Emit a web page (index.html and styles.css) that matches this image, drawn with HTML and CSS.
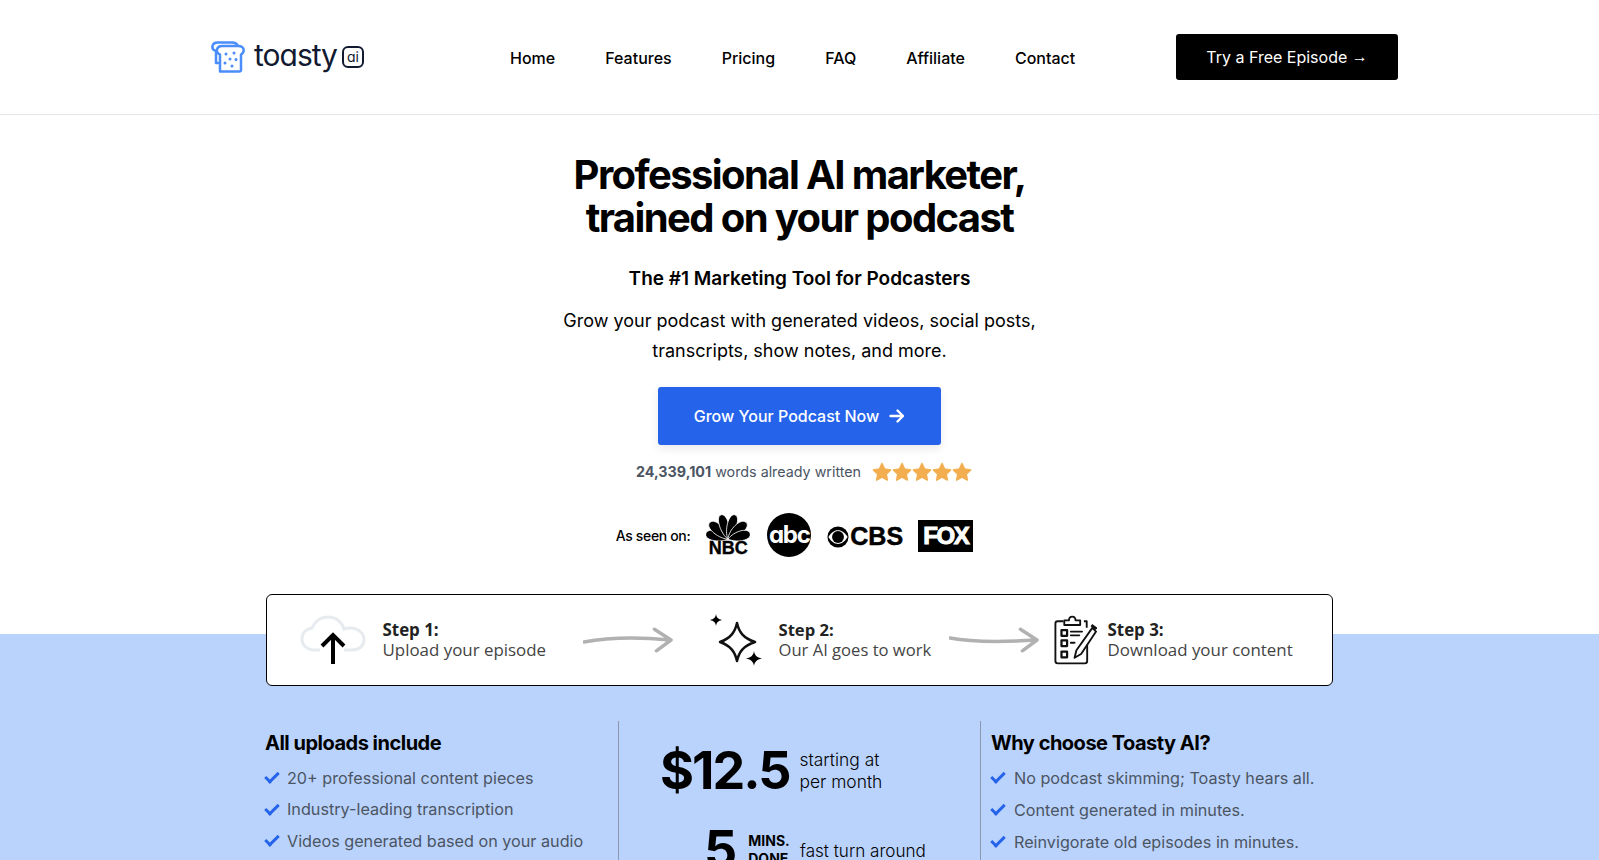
FILE: index.html
```html
<!DOCTYPE html>
<html lang="en">
<head>
  <meta charset="UTF-8">
  <meta name="viewport" content="width=device-width, initial-scale=1.0">
  <title>Toasty AI</title>
  <link rel="stylesheet" href="styles.css">
</head>
<body>
  <header class="site-header">
    <a class="logo" href="#">
      <svg class="logo-toast" viewBox="0 0 34 32" fill="none" stroke="#4a8dfb" stroke-width="2.500" stroke-linejoin="round" stroke-linecap="round">
        <path d="M7 22H5V10C2 9 1 7 1.500 5C2 3 4 1.500 6.500 1.500H21C24 1.500 26 2.500 27 5"/>
        <path d="M9 30.500V13.500C6.500 12.500 5.500 10.500 6 8.500C6.500 6.500 8.500 5 11 5H27.500C30.500 5 32.700 6.800 32.700 9.300C32.700 11.300 31.500 12.700 30 13.500V29C30 30 29 30.500 28 30.500Z" fill="#fff"/>
        <g fill="#4a8dfb" stroke="none">
          <circle cx="15" cy="13" r="1.500"/><circle cx="23" cy="12" r="1.500"/>
          <circle cx="19" cy="18" r="1.500"/><circle cx="25" cy="18.500" r="1.500"/>
          <circle cx="14" cy="22" r="1.500"/><circle cx="21" cy="25" r="1.500"/>
        </g>
      </svg>
      <span class="logo-word">toasty</span>
      <span class="logo-ai">ai</span>
    </a>
    <nav class="main-nav">
      <a href="#">Home</a>
      <a href="#">Features</a>
      <a href="#">Pricing</a>
      <a href="#">FAQ</a>
      <a href="#">Affiliate</a>
      <a href="#">Contact</a>
    </nav>
    <a class="try-btn" href="#">Try a Free Episode <span class="try-arrow">→</span></a>
  </header>

  <section class="hero">
    <h1>Professional AI marketer,<br>trained on your podcast</h1>
    <p class="hero-sub">The #1 Marketing Tool for Podcasters</p>
    <p class="hero-text">Grow your podcast with generated videos, social posts,<br>transcripts, show notes, and more.</p>
    <a class="grow-btn" href="#">
      Grow Your Podcast Now
      <svg viewBox="0 0 16 16" fill="none" stroke="#fff" stroke-width="2.400" stroke-linecap="round" stroke-linejoin="round"><path d="M1.500 8H14M8.500 2.500L14 8L8.500 13.500"/></svg>
    </a>
    <div class="words-row">
      <span><b>24,339,101</b> words already written</span>
      <span class="stars">
        <svg viewBox="0 0 20 20"><path d="M10 1.500l2.600 5.600 6 .8-4.400 4.200 1.200 6L10 15.200l-5.400 2.900 1.200-6-4.400-4.200 6-.8z"/></svg>
        <svg viewBox="0 0 20 20"><path d="M10 1.500l2.600 5.600 6 .8-4.400 4.200 1.200 6L10 15.200l-5.400 2.900 1.200-6-4.400-4.200 6-.8z"/></svg>
        <svg viewBox="0 0 20 20"><path d="M10 1.500l2.600 5.600 6 .8-4.400 4.200 1.200 6L10 15.200l-5.400 2.900 1.200-6-4.400-4.200 6-.8z"/></svg>
        <svg viewBox="0 0 20 20"><path d="M10 1.500l2.600 5.600 6 .8-4.400 4.200 1.200 6L10 15.200l-5.400 2.900 1.200-6-4.400-4.200 6-.8z"/></svg>
        <svg viewBox="0 0 20 20"><path d="M10 1.500l2.600 5.600 6 .8-4.400 4.200 1.200 6L10 15.200l-5.400 2.900 1.200-6-4.400-4.200 6-.8z"/></svg>
      </span>
    </div>
    <div class="seen-row">
      <span class="seen-label">As seen on:</span>
      <span class="nbc">
        <svg viewBox="0 0 44 30" preserveAspectRatio="none" fill="#000" stroke="#fff" stroke-width=".8">
          <path transform="translate(22 28) rotate(-74)" d="M0 0C-7 -8 -7.500 -23 0 -23C7.500 -23 7 -8 0 0Z"/>
          <path transform="translate(22 28) rotate(-44)" d="M0 0C-7 -8 -7.500 -26 0 -26C7.500 -26 7 -8 0 0Z"/>
          <path transform="translate(22 28) rotate(-14)" d="M0 0C-6 -8 -6.500 -28 0 -28C6.500 -28 6 -8 0 0Z"/>
          <path transform="translate(22 28) rotate(14)" d="M0 0C-6 -8 -6.500 -28 0 -28C6.500 -28 6 -8 0 0Z"/>
          <path transform="translate(22 28) rotate(44)" d="M0 0C-7 -8 -7.500 -26 0 -26C7.500 -26 7 -8 0 0Z"/>
          <path transform="translate(22 28) rotate(74)" d="M0 0C-7 -8 -7.500 -23 0 -23C7.500 -23 7 -8 0 0Z"/>
        </svg>
        <span class="nbc-word">NBC</span>
      </span>
      <span class="abc">abc</span>
      <span class="cbs">
        <svg viewBox="0 0 24 24"><circle cx="12" cy="12" r="11.500"/><path d="M1.500 12C5 6 9 4.500 12 4.500S19 6 22.500 12C19 18 15 19.500 12 19.500S5 18 1.500 12Z" fill="#fff"/><circle cx="12" cy="12" r="6.500"/></svg>
        <span>CBS</span>
      </span>
      <span class="fox">FOX</span>
    </div>
  </section>

  <div class="steps-wrap">
    <div class="steps">
      <svg class="cloud" viewBox="0 0 66 50" fill="none">
        <path d="M20 35H14C7 35 2 30 2 24C2 18 6 14 12 13C15 6 21 2 28 2C36 2 42 7 44 14C46 13 48 13 50 13C58 13 64 18 64 25C64 31 59 35 52 35H44" stroke="#e7ebef" stroke-width="3"/>
        <path d="M33 49V21M22 31L33 20L44 31" stroke="#000" stroke-width="4"/>
      </svg>
      <div class="step-text step-one"><b>Step 1:</b><span>Upload your episode</span></div>
      <svg class="arrow arrow-one" viewBox="0 0 92 26" fill="none" stroke="#b1b1b1" stroke-width="3.500" stroke-linecap="round" stroke-linejoin="round"><path d="M1 15C28 10 58 10 89 13M73 2L90 13L75 24"/></svg>
      <svg class="sparkle" viewBox="0 0 52 52">
        <path d="M27 9C29 18 33 24 45 28C33 32 29 38 27 47C25 38 21 32 10 28C21 24 25 18 27 9Z" fill="none" stroke="#111" stroke-width="2.500" stroke-linejoin="round"/>
        <path d="M6 0C6.500 3.500 8 5 12 6C8 7 6.500 8.500 6 12C5.500 8.500 4 7 0 6C4 5 5.500 3.500 6 0Z"/>
        <path d="M44 37C44.600 41 46.500 43.500 52 44.500C46.500 45.500 44.600 48 44 52C43.400 48 41.500 45.500 36 44.500C41.500 43.500 43.400 41 44 37Z"/>
      </svg>
      <div class="step-text step-two"><b>Step 2:</b><span>Our AI goes to work</span></div>
      <svg class="arrow arrow-two" viewBox="0 0 92 26" fill="none" stroke="#b1b1b1" stroke-width="3.500" stroke-linecap="round" stroke-linejoin="round"><path d="M1 11C28 16 58 15 89 13M73 2L90 13L75 24"/></svg>
      <svg class="clipboard" viewBox="0 0 46 52" fill="none" stroke="#111" stroke-width="2" stroke-linejoin="round">
        <path d="M10 6H4C2.500 6 1.500 7 1.500 8.500V48.500C1.500 50 2.500 51 4 51H33C34.500 51 35.500 50 35.500 48.500V31"/>
        <path d="M32 6H35V13"/>
        <path d="M11 10V5H16C16 2.500 17.500 1 19.500 1S23 2.500 23 5H28V10Z"/>
        <path d="M8 15.500H14V21.500H8ZM8 26.500H14V32.500H8ZM8 38.500H14V44.500H8Z" stroke-width="2.400"/>
        <path d="M18 17H30M18 21H27M18 29H22" stroke-linecap="round"/>
        <path d="M41 13L45 17L29 41L22 45L24 37Z"/>
        <path d="M40 10L45.500 14" stroke-width="3"/>
      </svg>
      <div class="step-text step-three"><b>Step 3:</b><span>Download your content</span></div>
    </div>
  </div>

  <section class="details">
    <div class="details-grid">
      <div class="detail-col col-left">
        <h3>All uploads include</h3>
        <ul class="checks">
          <li>20+ professional content pieces</li>
          <li>Industry-leading transcription</li>
          <li>Videos generated based on your audio</li>
        </ul>
      </div>
      <div class="detail-col col-mid">
        <div class="price-row">
          <span class="price">$12.5</span>
          <span class="price-note">starting at<br>per month</span>
        </div>
        <div class="speed-row">
          <span class="speed-num">5</span>
          <span class="speed-unit">MINS.<br>DONE.</span>
          <span class="speed-note">fast turn around</span>
        </div>
      </div>
      <div class="detail-col col-right">
        <h3>Why choose Toasty AI?</h3>
        <ul class="checks checks-wide">
          <li>No podcast skimming; Toasty hears all.</li>
          <li>Content generated in minutes.</li>
          <li>Reinvigorate old episodes in minutes.</li>
        </ul>
      </div>
    </div>
  </section>
</body>
</html>
```

FILE: styles.css
```css
html, body {
  margin: 0;
  height: 100%;
  overflow: hidden;
}
body {
  font-family: Inter, "Liberation Sans", sans-serif;
  color: #000;
  background: #fff;
}
a {
  color: inherit;
  text-decoration: none;
}

/* header */
.site-header {
  height: 114px;
  border-bottom: 1px solid #e5e7eb;
  padding: 0 201px 0 211px;
  display: flex;
  align-items: center;
}
.logo {
  display: flex;
  align-items: center;
  width: 299px;
}
.logo-toast {
  width: 34px;
  height: 32px;
  margin-right: 9px;
}
.logo-word {
  font-size: 30px;
  letter-spacing: -1px;
  color: #111a30;
  line-height: 32px;
  font-feature-settings: "cv11";
  margin-top: -4px;
}
.logo-ai {
  width: 22px;
  height: 22px;
  margin-left: 5px;
  border: 2px solid #111a30;
  border-radius: 6px;
  font-size: 14px;
  line-height: 17px;
  text-align: center;
  color: #111a30;
  box-sizing: border-box;
  font-feature-settings: "cv11";
  margin-top: -1px;
}
.main-nav {
  display: flex;
  gap: 50px;
  font-size: 16px;
  font-weight: 450;
  flex: 1;
  padding-top: 2px;
}
.try-btn {
  width: 222px;
  height: 46px;
  background: #000;
  color: #fff;
  border-radius: 3px;
  font-size: 16px;
  font-weight: 400;
  display: flex;
  align-items: center;
  justify-content: center;
  white-space: pre;
}
.try-arrow {
  font-family: "Liberation Sans", sans-serif;
  font-weight: 400;
}

/* hero */
.hero {
  display: flex;
  flex-direction: column;
  align-items: center;
  padding-top: 38px;
}
h1 {
  margin: 0;
  font-size: 40px;
  line-height: 43px;
  font-weight: 700;
  letter-spacing: -1.600px;
  text-align: center;
}
.hero-sub {
  margin: 26px 0 0;
  font-size: 19px;
  line-height: 28px;
  font-weight: 600;
}
.hero-text {
  margin: 13px 0 0;
  font-size: 18px;
  line-height: 29.600px;
  text-align: center;
}
.grow-btn {
  margin-top: 22px;
  width: 283px;
  height: 58px;
  background: #2563eb;
  color: #fff;
  border-radius: 3px;
  font-size: 16px;
  font-weight: 450;
  display: flex;
  align-items: center;
  justify-content: center;
  gap: 10px;
  box-shadow: 0 4px 10px rgba(0, 0, 0, .08);
}
.grow-btn svg {
  width: 16px;
  height: 16px;
}
.words-row {
  margin-top: 14px;
  margin-left: 9px;
  height: 24px;
  display: flex;
  align-items: center;
  gap: 11px;
  font-size: 14.300px;
  color: #4b5563;
}
.words-row b {
  font-weight: 700;
}
.stars {
  display: flex;
  margin-top: 1px;
}
.stars svg {
  width: 20px;
  height: 20px;
  fill: #f2ae4f;
  stroke: #f2ae4f;
  stroke-width: 1.500;
  stroke-linejoin: round;
}
.seen-row {
  margin-top: 28px;
  margin-left: -10px;
  height: 48px;
  display: flex;
  align-items: center;
}
.seen-label {
  font-size: 14px;
  font-weight: 500;
  letter-spacing: -.35px;
  margin-right: 16px;
}
.nbc {
  width: 44px;
  display: flex;
  flex-direction: column;
  align-items: center;
}
.nbc svg {
  width: 44px;
  height: 27px;
}
.nbc-word {
  font-family: "Liberation Sans Narrow", "Liberation Sans", sans-serif;
  font-size: 18px;
  line-height: 15px;
  font-weight: 700;
  -webkit-text-stroke: .4px #000;
}
.abc {
  width: 44px;
  height: 44px;
  margin-left: 17px;
  border-radius: 50%;
  background: #000;
  color: #fff;
  font-size: 24px;
  font-weight: 700;
  line-height: 44px;
  letter-spacing: -1.200px;
  text-align: center;
  font-feature-settings: "cv11";
}
.cbs {
  margin-left: 16px;
  margin-top: 3px;
  width: 76px;
  display: flex;
  align-items: center;
  gap: 1px;
  font-family: "Liberation Sans", sans-serif;
  font-size: 25px;
  font-weight: 700;
  -webkit-text-stroke: .5px #000;
}
.cbs svg {
  width: 22px;
  height: 22px;
  flex: none;
}
.fox {
  margin-left: 15px;
  margin-top: 2px;
  width: 55px;
  height: 32px;
  background: #000;
  color: #fff;
  font-family: "Liberation Sans", sans-serif;
  font-size: 24px;
  font-weight: 700;
  line-height: 32px;
  text-align: center;
  letter-spacing: -1.500px;
  -webkit-text-stroke: 1px #fff;
}

/* steps box */
.steps-wrap {
  position: relative;
  margin-top: 35px;
  margin-bottom: -52px;
  display: flex;
  justify-content: center;
}
.steps {
  width: 1067px;
  height: 92px;
  margin-left: -1px;
  box-sizing: border-box;
  background: #fff;
  border: 1px solid #000;
  border-radius: 6px;
  display: flex;
  align-items: center;
  font-family: "Open Sans", sans-serif;
  color: #444;
  padding-left: 33px;
}
.cloud {
  width: 66px;
  height: 50px;
  flex: none;
}
.step-text {
  display: flex;
  flex-direction: column;
  font-size: 16.900px;
  line-height: 20px;
  white-space: nowrap;
}
.step-text b {
  font-weight: 700;
  color: #222;
}
.step-one {
  margin-left: 17px;
  width: 183px;
}
.arrow {
  width: 90px;
  height: 26px;
  flex: none;
}
.arrow-one {
  margin-left: 17px;
}
.sparkle {
  width: 52px;
  height: 52px;
  flex: none;
  margin-left: 37px;
}
.step-two {
  margin-left: 17px;
  width: 170px;
  font-size: 16.600px;
}
.clipboard {
  width: 43px;
  height: 52px;
  flex: none;
  margin-left: 15px;
}
.step-three {
  margin-left: 11px;
}

/* details */
.details {
  background: #bad3fd;
  padding-top: 87px;
  height: 300px;
}
.details-grid {
  width: 1067px;
  margin: 0 auto;
  transform: translateX(-1px);
  display: grid;
  grid-template-columns: 353px 363px 1fr;
}
.detail-col {
  min-height: 200px;
}
.col-mid {
  border-left: 1px solid #8b98ad;
  border-right: 1px solid #8b98ad;
}
.col-right {
  padding-left: 10px;
}
h3 {
  margin: 10px 0 0;
  font-size: 20px;
  line-height: 24px;
  font-weight: 700;
  letter-spacing: -.5px;
}
.checks {
  list-style: none;
  margin: 7px 0 0;
  padding: 0;
}
.checks li {
  display: flex;
  align-items: center;
  height: 31.500px;
  font-size: 16.200px;
  color: #4b5563;
  padding-left: 22px;
  position: relative;
}
.checks-wide li {
  height: 32px;
  padding-left: 23px;
}
.checks li::before {
  content: "";
  position: absolute;
  left: 0;
  top: 10px;
  width: 11px;
  height: 5px;
  border-left: 3px solid #2563eb;
  border-bottom: 3px solid #2563eb;
  transform: rotate(-45deg);
}
.price-row {
  display: flex;
  align-items: center;
  margin: 20px 0 0 41px;
}
.price {
  font-size: 52px;
  line-height: 60px;
  font-weight: 700;
  letter-spacing: -2px;
}
.price-note {
  margin-left: 10px;
  font-size: 17.400px;
  line-height: 22px;
  font-weight: 300;
}
.speed-row {
  display: flex;
  align-items: center;
  margin: 19px 0 0 85px;
}
.speed-num {
  font-size: 52px;
  line-height: 60px;
  font-weight: 700;
}
.speed-unit {
  margin-left: 11px;
  font-size: 14px;
  line-height: 18px;
  font-weight: 700;
}
.speed-note {
  margin-left: 7px;
  font-size: 17.100px;
  font-weight: 300;
}
```
